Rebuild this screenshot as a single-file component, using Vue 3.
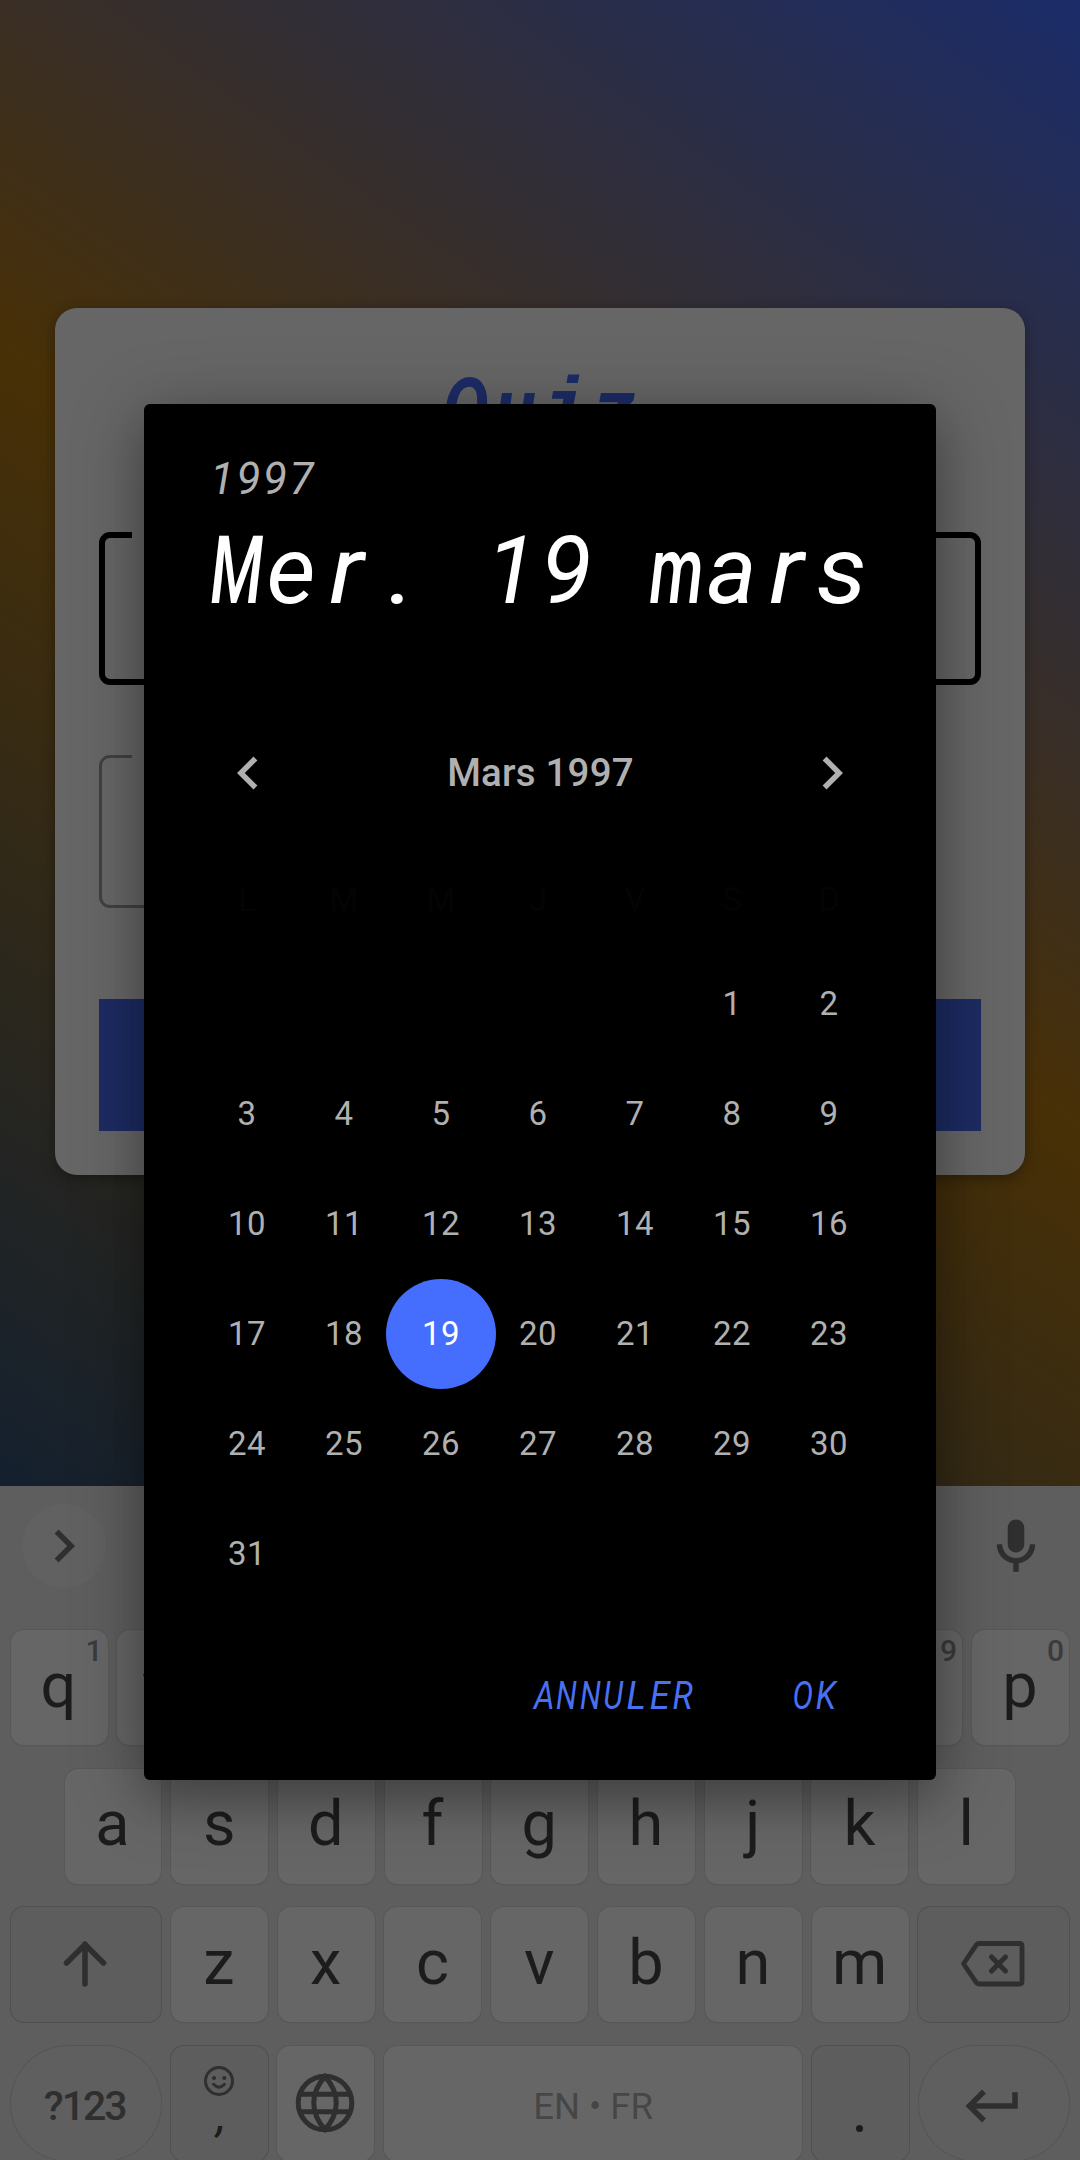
<script setup>
import { computed, defineComponent, h } from 'vue'

// Horizontal scale per glyph so that Roboto Italic fits a fixed-pitch cell.
const pitchScale = {
  M: 0.66, m: 0.68, e: 1.02, a: 1.02, s: 1.08, r: 1.12,
  A: 0.84, N: 0.78, U: 0.82, L: 0.96, E: 0.94, R: 0.88, O: 0.8, K: 0.86,
  Q: 0.84, u: 0.9, z: 1, '.': 1.15
}

const MonoText = defineComponent({
  props: { text: String },
  setup(props) {
    const chars = computed(() => [...props.text])
    return () =>
      h('span', { class: 'mono' }, chars.value.map((c) =>
        h('span', { class: 'mono-cell' }, [
          h('span', {
            class: ['mono-glyph', { heavy: c === 'M' || c === 'm', slab: c === 'i' }],
            style: { transform: `scaleX(${pitchScale[c] || 1})` }
          }, c === ' ' ? '\u00a0' : c)
        ])
      ))
  }
})

const weekdays = ['L', 'M', 'M', 'J', 'V', 'S', 'D']
const days = [...Array(5).fill(''), ...Array.from({ length: 31 }, (_, i) => i + 1)]
const selected = 19

const row1 = [...'qwertyuiop'].map((k, i) => ({ k, hint: (i + 1) % 10 }))
const row2 = [...'asdfghjkl']
const row3 = [...'zxcvbnm']
</script>

<template>
  <div class="screen">
    <main class="page">
      <section class="card">
        <h1 class="title"><MonoText text="Quiz" /></h1>
        <div class="field focused"></div>
        <div class="field short"></div>
        <div class="submit"></div>
      </section>
    </main>

    <section class="keyboard">
      <div class="toolbar">
        <div class="expand">
          <svg class="ic" viewBox="0 0 24 24"><path d="M10 6L8.59 7.41 13.17 12l-4.58 4.59L10 18l6-6z" /></svg>
        </div>
        <svg class="ic mic" viewBox="0 0 24 24"><path d="M12 14c1.66 0 3-1.34 3-3V5c0-1.66-1.34-3-3-3S9 3.34 9 5v6c0 1.66 1.34 3 3 3zM17 11c0 2.76-2.24 5-5 5s-5-2.24-5-5H5c0 3.53 2.61 6.43 6 6.92V21h2v-3.08c3.39-.49 6-3.39 6-6.92h-2z" /></svg>
      </div>
      <div class="row">
        <div v-for="key in row1" :key="key.k" class="key"><span class="hint">{{ key.hint }}</span>{{ key.k }}</div>
      </div>
      <div class="row inset">
        <div v-for="k in row2" :key="k" class="key">{{ k }}</div>
      </div>
      <div class="row">
        <div class="key fn wide">
          <svg class="shift" viewBox="0 0 44 48" fill="none"><path d="M22 44V4M3.5 23L22 4.5L40.5 23" /></svg>
        </div>
        <div v-for="k in row3" :key="k" class="key">{{ k }}</div>
        <div class="key fn wide">
          <svg class="back" viewBox="0 0 64 46" fill="none">
            <path class="outline" d="M18 2.5H58.5Q61 2.5 61 5V40.5Q61 43 58.5 43H18Q16.5 43 15.5 41.8L2.5 22.75L15.5 3.7Q16.5 2.5 18 2.5Z" />
            <path class="cross" d="M30.5 16L44.5 30M44.5 16L30.5 30" />
          </svg>
        </div>
      </div>
      <div class="row">
        <div class="key fn wide pill symbols">?123</div>
        <div class="key fn stack">
          <svg class="smile" viewBox="0 0 30 30" fill="none">
            <circle class="face" cx="15" cy="15" r="13.5" />
            <circle class="eye" cx="10" cy="12" r="2.1" />
            <circle class="eye" cx="20.3" cy="12" r="2.1" />
            <path class="face" d="M9.5 18.3Q15 24 20.5 18.3" />
          </svg>
          <span class="comma">,</span>
        </div>
        <div class="key">
          <svg class="globe" viewBox="0 0 60 60" fill="none">
            <circle cx="30" cy="30" r="26.8" />
            <path d="M30 3.5C15 20 15 40 30 56.5C45 40 45 20 30 3.5ZM5 21.3H55M5 38.7H55" />
          </svg>
        </div>
        <div class="key space">EN • FR</div>
        <div class="key fn dot"><span></span></div>
        <div class="key fn wide pill">
          <svg class="ic enter" viewBox="0 0 24 24"><path d="M19 7v4H5.83l3.58-3.59L8 6l-6 6 6 6 1.41-1.41L5.83 13H21V7z" /></svg>
        </div>
      </div>
    </section>

    <div class="dialog">
      <header class="head">
        <div class="year"><MonoText text="1997" /></div>
        <div class="date"><MonoText text="Mer. 19 mars" /></div>
      </header>
      <div class="month">
        <svg class="ic" viewBox="0 0 24 24"><path d="M15.41 7.41L14 6l-6 6 6 6 1.41-1.41L10.83 12z" /></svg>
        <span>Mars 1997</span>
        <svg class="ic" viewBox="0 0 24 24"><path d="M10 6L8.59 7.41 13.17 12l-4.58 4.59L10 18l6-6z" /></svg>
      </div>
      <div class="grid weekdays">
        <div v-for="(d, i) in weekdays" :key="i" class="cell">{{ d }}</div>
      </div>
      <div class="grid">
        <div v-for="(d, i) in days" :key="i" class="cell">
          <span :class="{ selected: d === selected }">{{ d }}</span>
        </div>
      </div>
      <footer class="actions">
        <MonoText text="ANNULER" />
        <MonoText text="OK" />
      </footer>
    </div>
  </div>
</template>

<style>
body { margin: 0; background: #5e5e5e; }
.mono { display: inline-flex; font-style: italic; }
.mono-cell { width: 0.6em; display: flex; justify-content: center; }
.mono-glyph { display: block; flex: none; }
.mono-glyph.heavy { font-weight: 500; }
.mono-glyph.slab { font-family: "Liberation Mono", monospace; padding-top: 5px; }
</style>

<style scoped>
.screen {
  position: relative;
  width: 1080px;
  height: 2160px;
  overflow: hidden;
  display: flex;
  flex-direction: column;
  font-family: Roboto, "Noto Sans", sans-serif;
}
.page {
  box-sizing: border-box;
  height: 1486px;
  flex: none;
  padding: 308px 55px 0;
  background: linear-gradient(36deg, #14202f 0%, #483006 50%, #1b2c69 100%);
}
.card {
  box-sizing: border-box;
  height: 867px;
  padding: 47px 44px 44px;
  border-radius: 22px;
  background: #666;
  box-shadow: 0 3px 14px rgba(0, 0, 0, 0.35);
  display: flex;
  flex-direction: column;
}
.title {
  margin: 0;
  height: 177px;
  text-align: center;
  font-size: 82.5px;
  line-height: 107px;
  font-weight: 700;
  color: #1c2c66;
}
.field {
  box-sizing: border-box;
  height: 153px;
  margin-bottom: 70px;
  border: 3px solid #414141;
  border-radius: 11px;
  position: relative;
}
.field.short { width: 780px; }
.field.focused { border: 6px solid #000; }
.field::before {
  content: "";
  position: absolute;
  left: 30px;
  top: -3px;
  width: 300px;
  height: 3px;
  background: #666;
}
.field.focused::before { left: 27px; top: -6px; height: 6px; }
.submit { height: 132px; margin-top: 21px; background: #1c2b62; }

.keyboard {
  flex: 1;
  padding: 0 11px 0 10.5px;
  background: #5e5e5e;
  color: #1c1c1c;
}
.ic { width: 66px; height: 66px; fill: currentColor; flex: none; }
.toolbar {
  height: 144px;
  padding: 0 20px 0 11px;
  display: flex;
  justify-content: space-between;
  color: #2f2f2f;
}
.expand {
  width: 84px;
  height: 84px;
  margin-top: 18px;
  border-radius: 50%;
  background: #616161;
  display: flex;
  align-items: center;
  justify-content: center;
}
.mic { margin-top: 28px; }
.row {
  display: flex;
  gap: 9.8px;
  height: 115px;
  margin-bottom: 23.5px;
}
.row.inset { padding: 0 54px; }
.key {
  box-sizing: border-box;
  position: relative;
  flex: 1 1 0;
  min-width: 0;
  padding: 0 1px 5px 0;
  border-radius: 13px;
  background: #666;
  box-shadow: 0 0 0 1px #585858, 0 1px 1px #505050;
  display: flex;
  align-items: center;
  justify-content: center;
  font-size: 63px;
  line-height: 1;
}
.key.fn { background: #5d5d5d; box-shadow: 0 0 0 1px #505050; color: #2f2f2f; }
.key.wide { flex: 0 0 150.5px; padding-bottom: 1px; }
.key.pill { border-radius: 58px; background: #5f5f5f; box-shadow: 0 0 0 1px #555; }
.hint {
  position: absolute;
  right: 5px;
  top: 6px;
  font-size: 30px;
  font-weight: 500;
  color: #3b3b3b;
}
.shift { width: 44px; height: 48px; stroke: #2f2f2f; stroke-width: 5.5; stroke-linecap: round; stroke-linejoin: round; }
.back { width: 64px; height: 46px; }
.outline { stroke: #2f2f2f; stroke-width: 4.8; stroke-linejoin: round; }
.cross { stroke: #2f2f2f; stroke-width: 5; stroke-linecap: round; }
.key.symbols { font-size: 41px; font-weight: 500; letter-spacing: -2px; padding: 7px 2px 0 0; }
.key.stack { flex-direction: column; justify-content: flex-start; padding-top: 20px; }
.smile { width: 30px; height: 30px; flex: none; }
.face { stroke: #2f2f2f; stroke-width: 3; stroke-linecap: round; }
.eye { fill: #2f2f2f; }
.comma { font-size: 48px; line-height: 50px; margin: -6px 0 0 5px; font-style: italic; color: #1c1c1c; }
.globe { width: 60px; height: 60px; margin-top: 5px; stroke: #2f2f2f; stroke-width: 5; }
.key.space { flex: 0 0 418px; font-size: 36.5px; color: #464646; padding: 8px 0 0; }
.dot span { width: 7px; height: 7px; border-radius: 50%; background: #1c1c1c; margin-top: 55px; }
.enter { margin-top: 7px; }

.dialog {
  position: absolute;
  left: 144px;
  top: 404px;
  box-sizing: border-box;
  width: 792px;
  height: 1376px;
  border-radius: 6px;
  background: #000;
  box-shadow: 0 12px 70px rgba(0, 0, 0, 0.34), 0 22px 34px rgba(0, 0, 0, 0.12);
  color: #b0b0b0;
}
.head { height: 303px; padding: 47px 65px 0; box-sizing: border-box; }
.year { font-size: 44px; line-height: 56px; height: 56px; }
.date { font-size: 93.5px; line-height: 110px; margin-top: 9px; color: #fff; white-space: nowrap; }
.date :deep(.mono-cell) { width: 55px; }
.month {
  height: 132px;
  padding: 0 71px;
  display: flex;
  align-items: center;
  justify-content: space-between;
  font-size: 38.5px;
  font-weight: 500;
}
.month span { letter-spacing: 0.2px; padding: 0 0 2px 1px; }
.grid {
  display: grid;
  grid-template-columns: repeat(7, 97px);
  grid-auto-rows: 110px;
  margin-left: 54.5px;
  font-size: 33px;
}
.grid.weekdays { color: #040404; }
.weekdays .cell { padding-top: 11px; }
.cell { box-sizing: border-box; height: 110px; display: flex; align-items: center; justify-content: center; }
.cell span { flex: none; letter-spacing: 0.5px; padding-bottom: 2px; }
.cell .selected {
  width: 110px;
  height: 110px;
  padding: 0;
  border-radius: 50%;
  background: #466efe;
  color: #fff;
  line-height: 110px;
  text-align: center;
}
.actions {
  display: flex;
  justify-content: flex-end;
  gap: 97px;
  padding: 64px 99px 0 0;
  font-size: 38.5px;
  line-height: 46px;
  color: #4a70f2;
}
</style>
